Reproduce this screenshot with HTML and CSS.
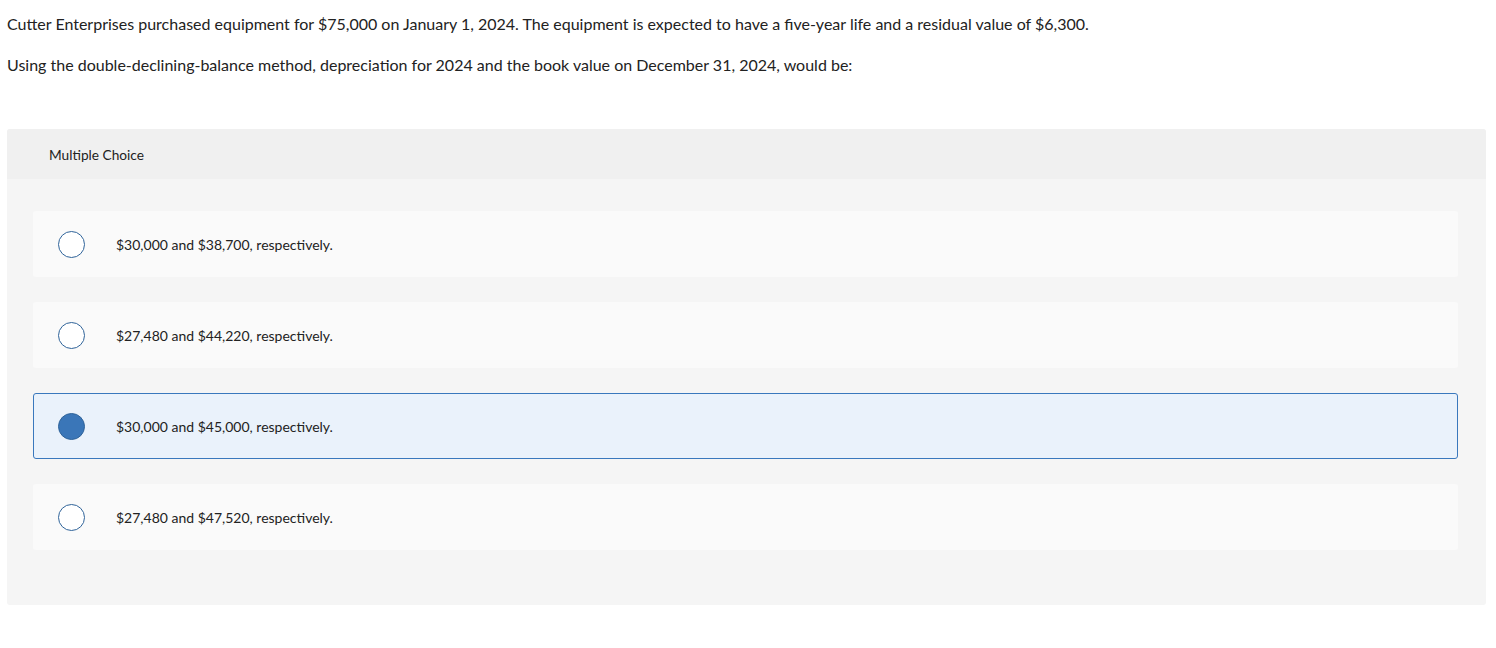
FILE: index.html
```html
<!DOCTYPE html>
<html>
<head>
<meta charset="utf-8">
<link rel="stylesheet" href="styles.css">
</head>
<body>
<div class="question">
  <p class="q-line q-first">Cutter Enterprises purchased equipment for $75,000 on January 1, 2024. The equipment is expected to have a five-year life and a residual value of $6,300.</p>
  <p class="q-line q-second">Using the double-declining-balance method, depreciation for 2024 and the book value on December 31, 2024, would be:</p>
</div>
<div class="panel">
  <div class="panel-head">Multiple Choice</div>
  <div class="panel-body">
    <div class="option">
      <span class="radio"></span>
      <span class="opt-text">$30,000 and $38,700, respectively.</span>
    </div>
    <div class="option">
      <span class="radio"></span>
      <span class="opt-text">$27,480 and $44,220, respectively.</span>
    </div>
    <div class="option selected">
      <span class="radio checked"></span>
      <span class="opt-text">$30,000 and $45,000, respectively.</span>
    </div>
    <div class="option">
      <span class="radio"></span>
      <span class="opt-text">$27,480 and $47,520, respectively.</span>
    </div>
  </div>
</div>
</body>
</html>
```
FILE: styles.css
```css
html, body {
  margin: 0;
  padding: 0;
  background: #ffffff;
}
body {
  font-family: "Lato", "Open Sans", sans-serif;
  color: #222222;
  padding: 0 10px 0 7px;
}
.question {
  padding-top: 14px;
}
.q-line {
  margin: 0;
  font-size: 16px;
  line-height: 20px;
  color: #222;
}
.q-second {
  margin-top: 21px;
}
.panel {
  margin-top: 54px;
  background: #f5f5f5;
  border-radius: 3px;
  overflow: hidden;
}
.panel-head {
  height: 50px;
  background: #f0f0f0;
  display: flex;
  align-items: center;
  padding-left: 42px;
  font-size: 13.7px;
  color: #222;
}
.panel-body {
  padding: 32px 28px 55px 26px;
  display: flex;
  flex-direction: column;
  gap: 25px;
}
.option {
  height: 66px;
  box-sizing: border-box;
  background: #fafafa;
  border-radius: 3px;
  display: flex;
  align-items: center;
  padding-left: 24px;
  border: 1px solid transparent;
}
.option.selected {
  background: #eaf2fb;
  border-color: #3a78bd;
}
.radio {
  width: 27px;
  height: 27px;
  box-sizing: border-box;
  border: 1.5px solid #2f6399;
  border-radius: 50%;
  background: #ffffff;
  flex: none;
}
.radio.checked {
  background: #3a76b8;
  border-color: #2f6399;
}
.opt-text {
  margin-left: 31px;
  font-size: 14px;
  color: #222;
}
```
